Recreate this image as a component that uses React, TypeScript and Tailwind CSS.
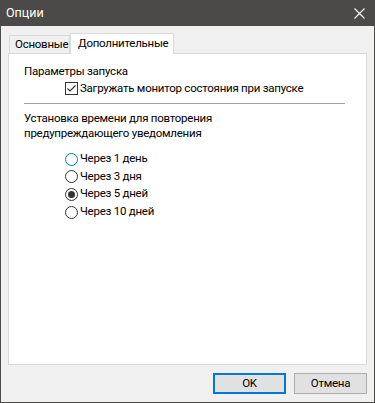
import React from "react";

const font = { fontFamily: 'Roboto, "Liberation Sans", sans-serif' };

function Radio({ checked, focused }: { checked?: boolean; focused?: boolean }) {
  return (
    <span
      className={`flex h-[13px] w-[13px] shrink-0 items-center justify-center rounded-full border bg-white ${
        focused ? "border-[#0078d7]" : "border-[#333333]"
      }`}
    >
      {checked && <span className="h-[7px] w-[7px] rounded-full bg-[#333333]" />}
    </span>
  );
}

function Checkbox() {
  return (
    <span className="flex h-[13px] w-[13px] shrink-0 items-center justify-center border border-[#333333] bg-white">
      <svg width="11" height="11" viewBox="0 0 11 11">
        <path d="M1.5 5.5 L4 8 L9.5 2.5" fill="none" stroke="#333333" strokeWidth="1.2" />
      </svg>
    </span>
  );
}

export default function App() {
  const radios = [
    { label: "Через 1 день", h: "h-[18px]", focused: true },
    { label: "Через 3 дня", h: "h-[17px]" },
    { label: "Через 5 дней", h: "h-[18px]", checked: true },
    { label: "Через 10 дней", h: "h-[18px]" },
  ];
  return (
    <div
      className="flex h-[403px] w-[375px] flex-col border-x border-b border-[#4b4a48] bg-[#f0f0f0] text-[11.5px] tracking-[-0.25px] text-black"
      style={font}
    >
      {/* Title bar */}
      <div className="flex h-[26px] shrink-0 items-center justify-between bg-[#4b4a48] pl-[5px] pr-[9px] text-white">
        <span className="text-[12.5px] leading-none tracking-normal">Опции</span>
        <svg width="11" height="11" viewBox="0 0 11 11">
          <path d="M0.5 0.5 L10.5 10.5 M10.5 0.5 L0.5 10.5" stroke="#ffffff" strokeWidth="1.1" />
        </svg>
      </div>

      {/* Tabs */}
      <div className="mt-[7px] flex h-[20px] shrink-0 items-end px-[7px]">
        <div className="ml-[1px] flex h-[18px] w-[61px] items-center border-x border-t border-[#d9d9d9] bg-[#f0f0f0] pl-[5px] pt-[1px]">
          Основные
        </div>
        <div className="relative z-10 -mb-px flex h-[21px] w-[104px] items-center border-x border-t border-[#d9d9d9] bg-white pl-[7px]">
          Дополнительные
        </div>
      </div>

      {/* Panel */}
      <div className="mx-[7px] flex h-[312px] shrink-0 flex-col border border-[#d9d9d9] bg-white pl-[15px] pt-[9px]">
        <div className="h-[16px] leading-[16px]">Параметры запуска</div>
        <div className="mt-[1px] flex h-[16px] items-center gap-[2px] pl-[41px] leading-[16px]">
          <Checkbox />
          <span>Загружать монитор состояния при запуске</span>
        </div>
        <div className="mt-[7px] h-px w-[321px] bg-[#a0a0a0]" />
        <div className="mt-[7px] leading-[15px]">
          Установка времени для повторения
          <br />
          предупреждающего уведомления
        </div>
        <div className="mt-[9px] flex flex-col pl-[41px]">
          {radios.map((r) => (
            <div key={r.label} className={`flex items-center gap-[2px] ${r.h}`}>
              <Radio checked={r.checked} focused={r.focused} />
              <span>{r.label}</span>
            </div>
          ))}
        </div>
      </div>

      {/* Buttons */}
      <div className="mt-[8px] flex shrink-0 justify-end gap-[8px] px-[7px]">
        <button className="flex h-[21px] w-[73px] items-center justify-center border-2 border-[#0078d7] bg-[#e1e1e1]">
          OK
        </button>
        <button className="flex h-[21px] w-[73px] items-center justify-center border border-[#adadad] bg-[#e1e1e1]">
          Отмена
        </button>
      </div>
    </div>
  );
}
